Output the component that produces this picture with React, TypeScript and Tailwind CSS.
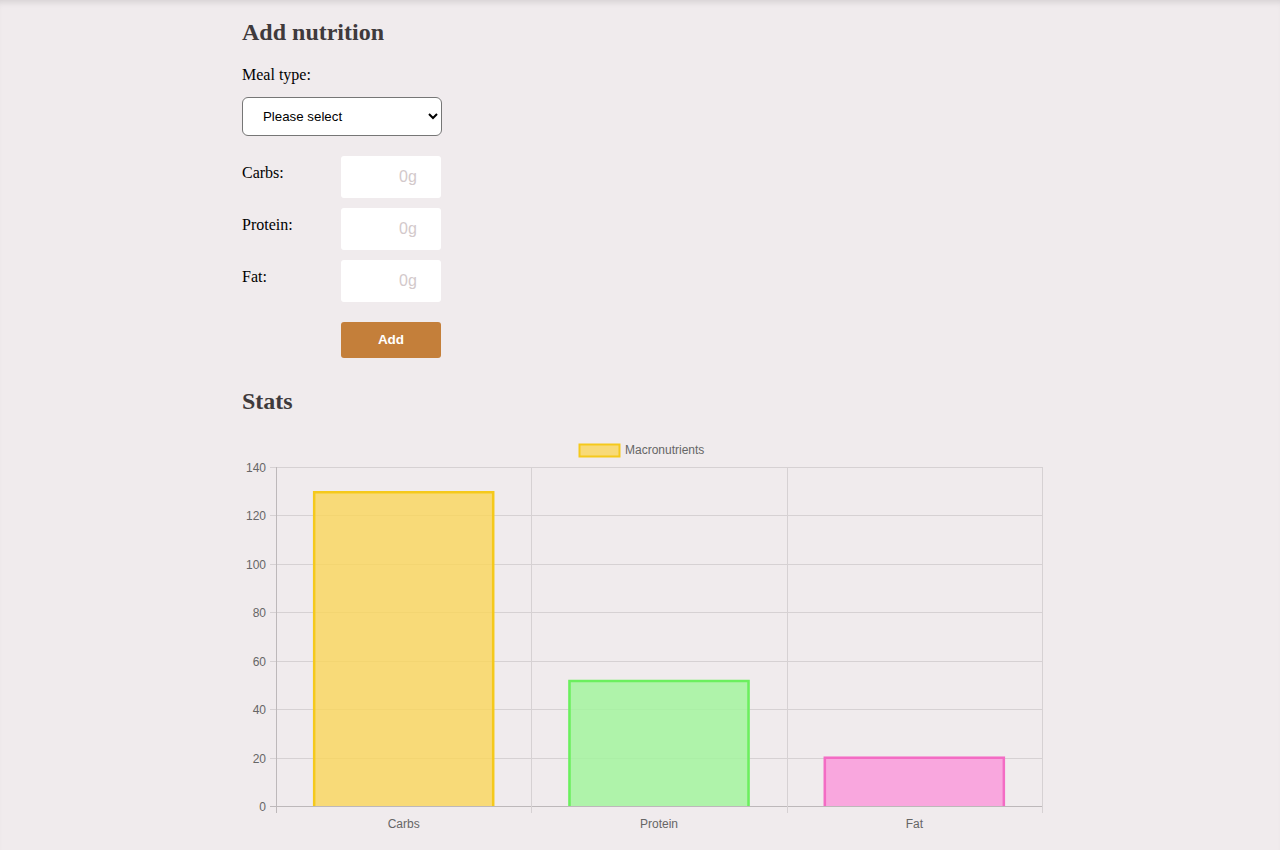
import React from "react";

const stats = [
  { name: "Carbs", value: 130, fill: "rgba(250,214,90,0.8)", stroke: "#f5c91c" },
  { name: "Protein", value: 52, fill: "rgba(163,245,158,0.85)", stroke: "#6bef5e" },
  { name: "Fat", value: 20.3, fill: "rgba(250,160,220,0.9)", stroke: "#f36cc4" },
];

function Chart() {
  // plot area in svg coords
  const left = 34;
  const right = 800;
  const top = 37;
  const bottom = 376;
  const max = 140;
  const step = (bottom - top) / 7;
  const colW = (right - left) / 3;
  const y = (v: number) => bottom - (v / max) * (bottom - top);

  return (
    <svg width={820} height={410} className="block font-['Liberation_Sans',Arial,sans-serif]">
      {/* legend */}
      <rect x={337.5} y={14.5} width={40} height={12} fill="rgba(250,214,90,0.8)" stroke="#f5c91c" strokeWidth={2} />
      <text x={383} y={24} fontSize={12} fill="#666">Macronutrients</text>

      {/* horizontal grid */}
      {[0, 1, 2, 3, 4, 5, 6, 7].map((i) => {
        const gy = Math.round(bottom - i * step) + 0.5;
        return (
          <g key={i}>
            <line x1={left - 6} x2={right} y1={gy} y2={gy} stroke={i === 0 ? "#bdb8ba" : "#d6d1d3"} strokeWidth={1} />
            <text x={left - 10} y={gy + 4} fontSize={12} fill="#666" textAnchor="end">
              {i * 20}
            </text>
          </g>
        );
      })}

      {/* vertical grid */}
      {[0, 1, 2, 3].map((i) => {
        const gx = Math.round(left + i * colW) + 0.5;
        return <line key={i} x1={gx} x2={gx} y1={top} y2={bottom + 7} stroke={i === 0 ? "#bdb8ba" : "#d6d1d3"} strokeWidth={1} />;
      })}

      {/* bars */}
      {stats.map((s, i) => {
        const bw = 181;
        const cx = left + colW * i + colW / 2;
        const by = y(s.value);
        return (
          <g key={s.name}>
            <rect x={cx - bw / 2} y={by} width={bw} height={bottom - by} fill={s.fill} />
            <path
              d={`M${cx - bw / 2 + 1} ${bottom} V${by + 1} H${cx + bw / 2 - 1} V${bottom}`}
              fill="none"
              stroke={s.stroke}
              strokeWidth={2.5}
            />
            <text x={cx} y={bottom + 22} fontSize={12} fill="#666" textAnchor="middle">
              {s.name}
            </text>
          </g>
        );
      })}
    </svg>
  );
}

export default function App() {
  const fields = ["Carbs", "Protein", "Fat"];

  return (
    <div className="min-h-[850px] bg-[#f0ebed] shadow-[inset_0_6px_6px_-4px_rgba(0,0,0,0.12)]">
      <main className="w-[800px] ml-[242px] pt-[17px] font-['Liberation_Serif','Times_New_Roman',serif]">
        <h2 className="text-[24px] font-bold text-[#3f3a3c] leading-[30px]">Add nutrition</h2>

        <div className="mt-[19px] text-[16px] text-black leading-[18px]">Meal type:</div>

        <select
          className="mt-[13px] w-[200px] h-[39px] rounded-[6px] border border-[#767676] bg-white pl-[16px] pr-[4px] text-[13.3px] text-black font-['Liberation_Sans',Arial,sans-serif]"
          defaultValue=""
        >
          <option value="">Please select</option>
          <option>Breakfast</option>
          <option>Lunch</option>
          <option>Dinner</option>
          <option>Snack</option>
        </select>

        <div className="mt-[20px] flex flex-col gap-[10px]">
          {fields.map((f) => (
            <div key={f} className="flex">
              <label className="w-[99px] pt-[8px] text-[16px] leading-[18px] text-black">{f}:</label>
              <input
                placeholder="0g"
                className="w-[100px] h-[42px] rounded-[3px] bg-white pl-[58px] text-[16px] outline-none placeholder:text-[#d3c9cb] font-['Liberation_Sans',Arial,sans-serif]"
              />
            </div>
          ))}
        </div>

        <button className="mt-[20px] ml-[99px] w-[100px] h-[36px] rounded-[3px] bg-[#c47f3a] text-white text-[13.5px] font-bold font-['Liberation_Sans',Arial,sans-serif]">
          Add
        </button>

        <h2 className="mt-[28px] text-[24px] font-bold text-[#3f3a3c] leading-[30px]">Stats</h2>

        <div className="mt-[14px]">
          <Chart />
        </div>
      </main>
    </div>
  );
}
